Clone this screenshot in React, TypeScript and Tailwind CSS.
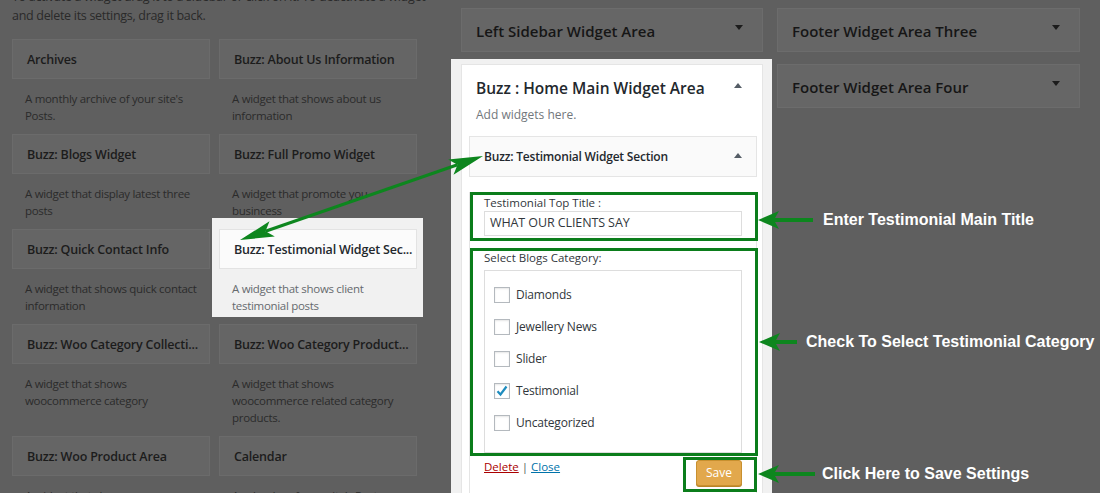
import React from 'react';

function Caret({ up, dim }: { up?: boolean; dim?: boolean }) {
  return (
    <svg width="8" height="5" viewBox="0 0 8 5" className="shrink-0">
      <path d={up ? 'M0 5 L4 0 L8 5 Z' : 'M0 0 L8 0 L4 5 Z'} fill={dim ? '#1c1c1c' : '#555d66'} />
    </svg>
  );
}

function LeftArrow({ w }: { w: number }) {
  return (
    <svg width={w} height="20" viewBox={`0 0 ${w} 20`} className="shrink-0">
      <path d={`M0 10 L21 1 L17 8 L${w} 8 L${w} 12 L17 12 L21 19 Z`} fill="#0d861e" />
    </svg>
  );
}

function DimWidget({ title, lines }: { title: string; lines: string[] }) {
  return (
    <div>
      <div className="h-[40px] flex items-center pt-[2px] px-[14px] bg-[#656565] border border-[#6b6b6b] text-[12.5px] font-semibold tracking-[-0.2px] text-[#1c1c1c] whitespace-nowrap overflow-hidden">
        {title}
      </div>
      <div className="pt-[11px] pb-[10px] px-[13px] text-[11.5px] leading-[17px] tracking-[-0.3px] text-[#2b2b2b] min-h-[55px]">
        {lines.map((l) => (
          <div key={l}>{l}</div>
        ))}
      </div>
    </div>
  );
}

function LitWidget({ title, lines }: { title: string; lines: string[] }) {
  return (
    <div className="relative">
      <div className="absolute -left-[7px] -right-[6px] -top-[11px] h-[99px] bg-[#f1f1f1]" />
      <div className="relative">
        <div className="h-[40px] flex items-center pt-[2px] px-[14px] bg-[#fbfbfb] border border-[#e3e3e3] text-[12.5px] font-semibold tracking-[-0.2px] text-[#23282d] whitespace-nowrap overflow-hidden">
          {title}
        </div>
        <div className="pt-[11px] pb-[10px] px-[13px] text-[11.5px] leading-[17px] tracking-[-0.3px] text-[#666a6e] min-h-[55px]">
          {lines.map((l) => (
            <div key={l}>{l}</div>
          ))}
        </div>
      </div>
    </div>
  );
}

function DimPanel({ title }: { title: string }) {
  return (
    <div className="h-[44px] bg-[#666666] border border-[#6c6c6c] flex items-center justify-between pt-[2px] pl-[14px] pr-[19px]">
      <span className="text-[15px] font-semibold text-[#161616] whitespace-nowrap">{title}</span>
      <span className="-mt-[7px]">
        <Caret dim />
      </span>
    </div>
  );
}

function Check({ checked, label }: { checked?: boolean; label: string }) {
  return (
    <div className="h-[32px] flex items-center gap-[6px]">
      <div className="w-[16px] h-[16px] border border-[#b4b9be] bg-white shadow-[inset_0_1px_2px_rgba(0,0,0,0.1)] flex items-center justify-center">
        {checked && (
          <svg width="14" height="14" viewBox="0 0 14 14">
            <path d="M2.5 7.2 L5.5 10.5 L11.5 2.5" stroke="#1e8cbe" strokeWidth="2.2" fill="none" />
          </svg>
        )}
      </div>
      <span className="text-[12px] text-[#32373c] tracking-[-0.2px]">{label}</span>
    </div>
  );
}

export default function App() {
  return (
    <div className="relative w-[1100px] h-[493px] overflow-hidden bg-[#5f5f5f] font-['Open_Sans','Noto_Sans',sans-serif]">
      <div className="flex">
        {/* left column */}
        <div className="w-[417px] pl-[12px] shrink-0">
          <div className="-mt-[13px] text-[12.5px] leading-[19px] tracking-[-0.3px] text-[#2a2a2a] whitespace-nowrap">
            <div>To activate a widget drag it to a sidebar or click on it. To deactivate a widget</div>
            <div>and delete its settings, drag it back.</div>
          </div>
          <div className="mt-[14px] grid grid-cols-[198px_198px] gap-x-[9px]">
            <DimWidget title="Archives" lines={["A monthly archive of your site's", 'Posts.']} />
            <DimWidget title="Buzz: About Us Information" lines={['A widget that shows about us', 'information']} />
            <DimWidget title="Buzz: Blogs Widget" lines={['A widget that display latest three', 'posts']} />
            <DimWidget title="Buzz: Full Promo Widget" lines={['A widget that promote you', 'busincess']} />
            <DimWidget title="Buzz: Quick Contact Info" lines={['A widget that shows quick contact', 'information']} />
            <LitWidget title="Buzz: Testimonial Widget Sec..." lines={['A widget that shows client', 'testimonial posts']} />
            <DimWidget title="Buzz: Woo Category Collecti..." lines={['A widget that shows', 'woocommerce category']} />
            <DimWidget
              title="Buzz: Woo Category Product..."
              lines={['A widget that shows', 'woocommerce related category', 'products.']}
            />
            <DimWidget title="Buzz: Woo Product Area" lines={['A widget that shows']} />
            <DimWidget title="Calendar" lines={["A calendar of your site's Posts."]} />
          </div>
        </div>

        {/* right area */}
        <div className="ml-[44px] flex gap-[14px] pt-[8px]">
          <div className="w-[302px] shrink-0">
            <DimPanel title="Left Sidebar Widget Area" />
            <div className="mt-[7px] -ml-[10px] -mr-[9px] pl-[10px] pr-[9px] pt-[5px] bg-[#f1f1f1] h-[440px]">
              <div className="bg-white border border-[#e5e5e5] h-full">
                <div className="pt-[12px] pl-[14px] pr-[20px] flex justify-between items-start">
                  <div className="text-[15.5px] font-semibold leading-[22px] text-[#23282d]">Buzz : Home Main Widget Area</div>
                  <span className="mt-[6px]">
                    <Caret up />
                  </span>
                </div>
                <div className="px-[14px] mt-[7px] text-[12px] leading-[18px] text-[#72777c]">Add widgets here.</div>
                <div className="mt-[12px] ml-[7px] mr-[5px]">
                  <div className="h-[41px] border border-[#e5e5e5] bg-[#fafafa] flex items-center justify-between pl-[14px] pr-[14px]">
                    <span className="text-[12px] font-semibold text-[#23282d] tracking-[-0.2px]">Buzz: Testimonial Widget Section</span>
                    <span className="-mt-[2px]">
                      <Caret up />
                    </span>
                  </div>
                  <div className="border-x border-b border-[#e5e5e5] px-[14px] pb-[20px] bg-white">
                    {/* box 1 */}
                    <div className="relative mt-[15px] -ml-[14px] -mr-[16px] border-[3px] border-[#0b7d1b] pl-[11px] pr-[13px] pb-[2px]">
                      <div className="text-[11.5px] leading-[15px] text-[#32373c]">Testimonial Top Title :</div>
                      <div className="mt-[1px] h-[25px] border border-[#dddddd] bg-white px-[5px] flex items-center text-[12.5px] text-[#32373c] tracking-[-0.1px]">
                        WHAT OUR CLIENTS SAY
                      </div>
                      <div className="absolute left-full top-[13px] ml-[3px] flex items-center">
                        <LeftArrow w={55} />
                        <span className="ml-[10px] whitespace-nowrap font-['Liberation_Sans',Arial,sans-serif] font-bold text-[16px] text-white">
                          Enter Testimonial Main Title
                        </span>
                      </div>
                    </div>
                    {/* box 2 */}
                    <div className="relative mt-[7px] -ml-[14px] -mr-[16px] border-[3px] border-[#0b7d1b] pl-[11px] pr-[13px]">
                      <div className="text-[11.5px] leading-[14px] text-[#32373c]">Select Blogs Category:</div>
                      <div className="mt-[5px] h-[183px] border border-[#dddddd] bg-white pt-[8px] pl-[9px]">
                        <Check label="Diamonds" />
                        <Check label="Jewellery News" />
                        <Check label="Slider" />
                        <Check label="Testimonial" checked />
                        <Check label="Uncategorized" />
                      </div>
                      <div className="absolute left-full top-[79px] ml-[4px] flex items-center">
                        <LeftArrow w={38} />
                        <span className="ml-[9px] whitespace-nowrap font-['Liberation_Sans',Arial,sans-serif] font-bold text-[16px] text-white">
                          Check To Select Testimonial Category
                        </span>
                      </div>
                    </div>
                    {/* footer */}
                    <div className="flex items-start">
                      <div className="leading-[21px] text-[11.5px]">
                        <span className="text-[#a00] underline">Delete</span>
                        <span className="text-[#555]"> | </span>
                        <span className="text-[#0073aa] underline">Close</span>
                      </div>
                      <div className="relative ml-auto mt-[1px] -mr-[15px] border-[3px] border-[#0b7d1b] pl-[10px] pr-[12px] pb-[3px]">
                        <div className="w-[46px] h-[26px] rounded-[3px] bg-[#e2a84c] border border-[#c8902f] shadow-[0_1px_0_#b98327] flex items-center justify-center text-[12px] text-white">
                          Save
                        </div>
                        <div className="absolute left-full top-[2px] ml-[4px] flex items-center">
                          <LeftArrow w={57} />
                          <span className="ml-[7px] whitespace-nowrap font-['Liberation_Sans',Arial,sans-serif] font-bold text-[16px] text-white">
                            Click Here to Save Settings
                          </span>
                        </div>
                      </div>
                    </div>
                  </div>
                </div>
              </div>
            </div>
          </div>
          <div className="w-[303px] shrink-0 flex flex-col gap-[12px]">
            <DimPanel title="Footer Widget Area Three" />
            <DimPanel title="Footer Widget Area Four" />
          </div>
        </div>
      </div>

      {/* diagonal double-headed arrow annotation */}
      <svg className="absolute left-0 top-0 pointer-events-none" width="1100" height="493" viewBox="0 0 1100 493">
        <line x1="265.5" y1="231.2" x2="457.5" y2="164.8" stroke="#0d861e" strokeWidth="3.2" />
        <path d="M483 156 L448.2 159.6 L457.5 164.8 L453.5 174.7 Z" fill="#0d861e" />
        <path d="M240 240 L269.5 221.3 L265.5 231.2 L274.8 236.5 Z" fill="#0d861e" />
      </svg>
    </div>
  );
}
